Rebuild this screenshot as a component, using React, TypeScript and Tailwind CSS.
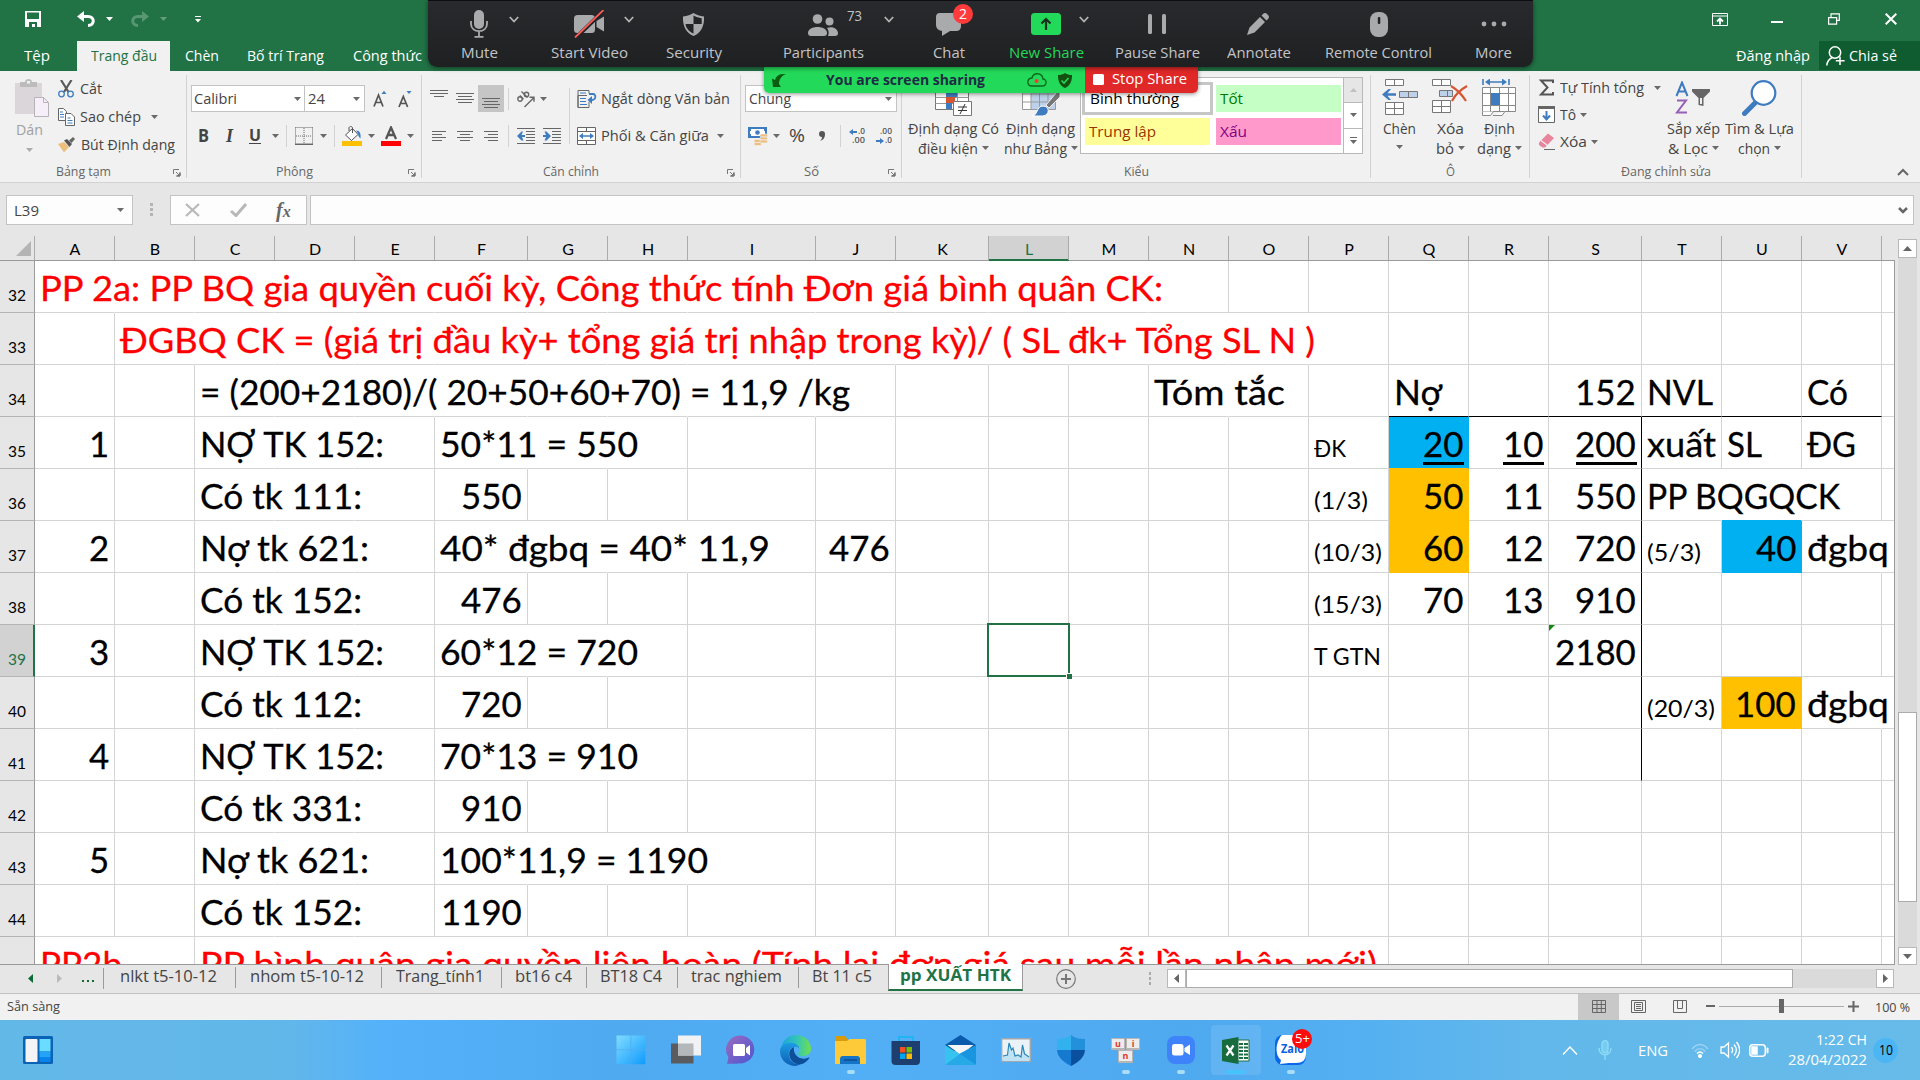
import React, { useLayoutEffect, useRef } from "react";

/* Text that is condensed or widened to take exactly `w` pixels. */
function T({ w, children, className = "", flat }: { w: number; children: React.ReactNode; className?: string; flat?: boolean }) {
  const inner = useRef<HTMLSpanElement>(null);
  useLayoutEffect(() => {
    const el = inner.current;
    if (!el) return;
    el.style.transform = "none";
    const natural = el.getBoundingClientRect().width;
    if (natural > 0) el.style.transform = `scaleX(${w / natural})`;
  }, [w, children]);
  return (
    <span className={"inline-block shrink-0 whitespace-pre text-left leading-none " + (flat ? "" : "-translate-y-px ") + className} style={{ width: w }}>
      <span ref={inner} className="inline-block origin-left">
        {children}
      </span>
    </span>
  );
}

function Caret({ className = "" }: { className?: string }) {
  return (
    <svg viewBox="0 0 7 4" className={"h-[4px] w-[7px] shrink-0 " + className}>
      <path d="M0 0h7L3.5 4z" fill="#6a6a6a" />
    </svg>
  );
}

function Sep({ className = "" }: { className?: string }) {
  return <div className={"w-px shrink-0 bg-[#d2d2d2] " + className} />;
}

function Launcher() {
  return (
    <svg viewBox="0 0 8 8" className="h-[8px] w-[8px]" fill="none" stroke="#777" strokeWidth="1">
      <path d="M.5 5V.5H6M3 3l3.5 3.5M7 3v4H3" />
      <path d="M7 4v3H4z" fill="#777" />
    </svg>
  );
}

function Group({ width, label, labelW, launcher, children }: { width: string; label: string; labelW: number; launcher?: boolean; children: React.ReactNode }) {
  return (
    <div className={"flex h-[111px] shrink-0 " + width}>
      <div className="flex min-w-0 flex-1 flex-col">
        <div className="flex h-[89px]">{children}</div>
        <div className={"relative flex h-[22px] items-center justify-center pt-[4px] text-[13.5px] text-[#666] " + (launcher ? "pr-[20px]" : "")}>
          <T w={labelW}>{label}</T>
          {launcher && (
            <div className="absolute right-[5px] top-[9px]">
              <Launcher />
            </div>
          )}
        </div>
      </div>
      <Sep className="mt-[4px] h-[103px]" />
    </div>
  );
}

function Big({ width, icon, a, aw, b, bw }: { width: string; icon: React.ReactNode; a: string; aw: number; b?: string; bw?: number }) {
  return (
    <div className={"flex shrink-0 flex-col items-center pt-[7px] " + width}>
      <div className="flex h-[40px] items-center">{icon}</div>
      <div className="flex h-[20px] items-center pt-[2px]">
        <T w={aw}>{a}</T>
      </div>
      <div className="flex h-[20px] items-center gap-[4px] pt-[3px]">
        {b && <T w={bw || 0}>{b}</T>}
        <Caret className={b ? "mb-[3px]" : "mb-[6px]"} />
      </div>
    </div>
  );
}

function Lines({ rows, className = "" }: { rows: [number, number, number][]; className?: string }) {
  return (
    <svg viewBox="0 0 18 18" className={"h-[18px] w-[18px] shrink-0 " + className} fill="#666">
      {rows.map(([x, y, w], i) => (
        <rect key={i} x={x} y={y} width={w} height="1" />
      ))}
    </svg>
  );
}

/* ---------- title bar and ribbon tabs ---------- */

function TitleBar() {
  return (
    <div className="flex h-[41px] items-center pb-[3px] text-white">
      <svg viewBox="0 0 16 16" className="ml-[25px] h-[16px] w-[16px]">
        <path fillRule="evenodd" fill="#fff" d="M0 0h16v16H0zM2 1.5V8h12V1.5zM4 16v-5h8v5h-2v-3H7v3z" />
        <path d="M4 11h8v4.5h-2V13H7v2.500H4z" fill="#217346" />
      </svg>
      <svg viewBox="0 0 18 16" className="ml-[36px] h-[16px] w-[18px]" fill="none" stroke="#fff" strokeWidth="3">
        <path d="M4 5.500h7c7 0 7 9 0 9" />
        <path d="M0 5.500L7 0v11z" fill="#fff" stroke="none" />
      </svg>
      <svg viewBox="0 0 7 4" className="ml-[11px] h-[4px] w-[7px]"><path d="M0 0h7L3.500 4z" fill="#fff" /></svg>
      <svg viewBox="0 0 18 16" className="ml-[18px] h-[16px] w-[18px] opacity-25" fill="none" stroke="#fff" strokeWidth="3">
        <path d="M14 5.500H7c-7 0-7 9 0 9" />
        <path d="M18 5.500L11 0v11z" fill="#fff" stroke="none" />
      </svg>
      <svg viewBox="0 0 7 4" className="ml-[11px] h-[4px] w-[7px] opacity-30"><path d="M0 0h7L3.500 4z" fill="#fff" /></svg>
      <svg viewBox="0 0 6 7" className="ml-[28px] h-[7px] w-[6px]"><path d="M0 0h6v1H0zM0 3h6L3 6.500z" fill="#fff" /></svg>
      <div className="flex-1" />
      <svg viewBox="0 0 16 13" className="h-[13px] w-[16px]" fill="none" stroke="#fff">
        <path d="M.5.500h15v12H.5zM.5 3h15" />
        <path d="M8 11.500V6M5 8.500l3-3 3 3" strokeWidth="1.800" />
      </svg>
      <div className="ml-[43px] mt-[6px] h-[2px] w-[12px] bg-white" />
      <svg viewBox="0 0 12 12" className="ml-[45px] h-[12px] w-[12px]" fill="none" stroke="#fff" strokeWidth="1.200">
        <path d="M.6 4.600h8v6.500h-8zM3 4.500V.8h8.300v6.500H9" />
      </svg>
      <svg viewBox="0 0 12 12" className="ml-[45px] mr-[23px] h-[12px] w-[12px]" stroke="#fff" strokeWidth="2">
        <path d="M.7.7l10.600 10.600M11.300.7L.7 11.300" />
      </svg>
    </div>
  );
}

function RibbonTabs() {
  return (
    <div className="flex h-[30px] items-center text-[15px] text-white">
      <T w={26} className="ml-[24px]">Tệp</T>
      <div className="ml-[27px] flex h-[30px] w-[93px] items-center justify-center bg-[#f1f1f1] text-[#217346]">
        <T w={66}>Trang đầu</T>
      </div>
      <T w={34} className="ml-[15px]">Chèn</T>
      <T w={77} className="ml-[28px]">Bố trí Trang</T>
      <T w={69} className="ml-[29px]">Công thức</T>
      <div className="flex-1" />
      <T w={74}>Đăng nhập</T>
      <div className="ml-[9px] flex h-[29px] w-[101px] items-center self-start bg-[#0e5c2f]">
        <svg viewBox="0 0 19 20" className="ml-[7px] h-[20px] w-[19px]" fill="none" stroke="#fff" strokeWidth="1.500">
          <circle cx="9" cy="6.500" r="5.700" />
          <path d="M.8 19.500c.3-4 2.500-6.500 5.500-8M14 10.500v8.500M9.800 14.700h8.800" />
        </svg>
        <T w={48} className="ml-[4px]" flat>Chia sẻ</T>
      </div>
    </div>
  );
}

/* ---------- ribbon groups ---------- */

function Clipboard() {
  return (
    <Group width="w-[187px]" label="Bảng tạm" labelW={55} launcher>
      <div className="flex w-[58px] flex-col pl-[15px] pt-[8px] text-[#a0a0a0]">
        <svg viewBox="0 0 34 38" className="h-[38px] w-[34px]">
          <path d="M0 4h27v31H0z" fill="#dad6da" />
          <path d="M5 3h5c0-4 7-4 7 0h5v5H5z" fill="#bcbcbc" />
          <rect x="12" y="2" width="3" height="2.500" fill="#f1f1f1" />
          <path d="M19.500 18.500h9l5 5v14h-14z" fill="#f6effa" stroke="#b7b2b7" />
          <path d="M28.500 18.500v5h5" fill="none" stroke="#b7b2b7" />
        </svg>
        <T w={27} className="ml-[1px] mt-[6px]">Dán</T>
        <Caret className="ml-[11px] mt-[10px] opacity-50" />
      </div>
      <div className="flex flex-col pt-[4px] text-[#444]">
        <div className="flex h-[28px] items-center">
          <svg viewBox="0 0 17 18" className="h-[18px] w-[17px]" fill="none">
            <path d="M3 0l7.500 12M13.500 0L6 12" stroke="#5a5a5a" strokeWidth="2.200" />
            <circle cx="3.500" cy="14" r="2.800" stroke="#3f7cbf" strokeWidth="1.300" />
            <circle cx="12.500" cy="14" r="2.800" stroke="#3f7cbf" strokeWidth="1.300" />
          </svg>
          <T w={22} className="ml-[5px]">Cắt</T>
        </div>
        <div className="flex h-[28px] items-center">
          <svg viewBox="0 0 17 18" className="h-[18px] w-[17px]" fill="#fff" stroke="#666">
            <path d="M.5.500h5l3 3v9h-8z" />
            <path d="M7.500 5.500h5.500l3.500 3.500v8.500h-9z" />
            <path d="M2 4h3M2 6.500h4M2 9h4M9.500 10h3M9.500 12.500h5M9.500 15h5" stroke="#3f7cbf" />
          </svg>
          <T w={61} className="ml-[5px]">Sao chép</T>
          <Caret className="ml-[10px]" />
        </div>
        <div className="flex h-[28px] items-center">
          <svg viewBox="0 0 17 16" className="h-[16px] w-[17px]">
            <path d="M0 7l6-2 5 5-5 5.500z" fill="#edbf7f" />
            <path d="M6 3.500l3-1.500 5 5-2.500 3z" fill="#555" />
            <path d="M11 3.500l4-3.500 2 2-3.500 4z" fill="#666" />
          </svg>
          <T w={94} className="ml-[6px]">Bút Định dạng</T>
        </div>
      </div>
    </Group>
  );
}

function FontGroup() {
  return (
    <Group width="w-[235px]" label="Phông" labelW={37} launcher>
      <div className="flex flex-col text-[#444]">
        <div className="mt-[14px] flex h-[27px] items-center">
          <div className="ml-[4px] flex h-[27px] w-[114px] items-center border border-[#c3c3c3] bg-white pl-[2px]">
            <T w={43} flat>Calibri</T>
            <Caret className="ml-auto mr-[3px]" />
          </div>
          <div className="-ml-px flex h-[27px] w-[61px] items-center border border-[#c3c3c3] bg-white pl-[3px]">
            <T w={17} flat>24</T>
            <Caret className="ml-auto mr-[4px]" />
          </div>
          <svg viewBox="0 0 16 18" className="ml-[8px] h-[18px] w-[16px]">
            <path d="M1 16.500L5.500 5 10 16.500M2.700 12.500h5.600" stroke="#555" strokeWidth="1.700" fill="none" />
            <path d="M8.500 4h5L11 .8z" fill="#3f7cbf" />
          </svg>
          <svg viewBox="0 0 16 18" className="ml-[9px] h-[18px] w-[16px]">
            <path d="M1 17L5.300 6.500 9.600 17M2.700 13.500h5.200" stroke="#555" strokeWidth="1.700" fill="none" />
            <path d="M8.500 1h5L11 4z" fill="#3f7cbf" />
          </svg>
        </div>
        <div className="mt-[8px] flex h-[32px] items-center">
          <T w={11} className="ml-[11px] text-[17px] font-bold">B</T>
          <span className="ml-[17px] w-[9px] font-['Liberation_Serif',serif] text-[18px] font-bold italic leading-none">I</span>
          <T w={12} className="ml-[14px] border-b-[1.5px] border-[#444] text-[16px] font-bold">U</T>
          <Caret className="ml-[11px]" />
          <Sep className="ml-[7px] h-[22px]" />
          <svg viewBox="0 0 18 18" className="ml-[8px] h-[18px] w-[18px]" fill="none" stroke="#666">
            <path d="M.5.500v17M.5.500h17M17.500.500v17M9 1v16M1 9h16" strokeDasharray="1 1" />
            <path d="M0 17.300h18" strokeWidth="1.500" />
          </svg>
          <Caret className="ml-[7px]" />
          <Sep className="ml-[7px] h-[22px]" />
          <svg viewBox="0 0 20 20" className="ml-[7px] h-[20px] w-[20px]">
            <rect y="15" width="20" height="5" fill="#ffc000" />
            <path d="M3.500 9l7-6.500 5.500 6-6.500 6z" fill="#fff" stroke="#555" />
            <path d="M7 5V2c0-2 3.500-2 3.500 0v5" fill="none" stroke="#555" />
            <path d="M14 4.500c4 0 5 3 4.500 8-1.500-1-2.300-3-2.500-5z" fill="#3f7cbf" />
          </svg>
          <Caret className="ml-[6px]" />
          <svg viewBox="0 0 20 20" className="ml-[6px] h-[20px] w-[20px]">
            <rect y="15" width="20" height="5" fill="#f00" />
            <path d="M5 13L10 1.500 15 13M6.500 9h7" stroke="#555" strokeWidth="2.300" fill="none" />
          </svg>
          <Caret className="ml-[6px]" />
        </div>
      </div>
    </Group>
  );
}

function Indent({ right }: { right?: boolean }) {
  return (
    <svg viewBox="0 0 18 18" className="h-[18px] w-[18px] shrink-0">
      <path d="M0 1.500h18M9 4.500h9M9 7.500h9M9 10.500h9M9 13.500h9M0 16.500h18" stroke="#666" />
      {right ? <path d="M0 8h3L1.500 4.500h2L8 9l-4.500 4.500h-2L3 10H0z" fill="#3f7cbf" /> : <path d="M8 8H4.500L6 4.500H4.500L0 9l4.500 4.500H6.500L5 10h3z" fill="#3f7cbf" />}
    </svg>
  );
}

function Alignment() {
  return (
    <Group width="w-[319px]" label="Căn chỉnh" labelW={56} launcher>
      <div className="flex w-[147px] flex-col">
        <div className="mt-[14px] flex h-[27px] items-center">
          <Lines className="ml-[8px]" rows={[[0, 0, 18], [4, 3, 10], [0, 3, 18], [4, 6, 10]]} />
          <Lines className="ml-[8px]" rows={[[0, 3, 18], [2, 6, 14], [0, 9, 18], [2, 12, 14]]} />
          <div className="ml-[4px] flex h-[27px] w-[26px] items-center justify-center bg-[#c5c5c5]">
            <Lines rows={[[0, 8, 18], [2, 11, 14], [0, 14, 18], [2, 17, 14]]} />
          </div>
          <Sep className="ml-[4px] h-[22px]" />
          <svg viewBox="0 0 18 18" className="ml-[8px] h-[18px] w-[18px]" fill="none" stroke="#666" strokeWidth="1.400">
            <circle cx="3" cy="9" r="2.200" />
            <path d="M2.800 5.500L6.500 9.300M4.500 1.500l6 6" />
            <circle cx="9.500" cy="4.500" r="2.200" />
            <path d="M7.500 17L17 7.500M12.500 7.300H17v4.500" />
          </svg>
          <Caret className="ml-[5px]" />
        </div>
        <div className="mt-[8px] flex h-[32px] items-center">
          <Lines className="ml-[8px]" rows={[[2, 4, 14], [2, 7, 10], [2, 10, 14], [2, 13, 10]]} />
          <Lines className="ml-[8px]" rows={[[1, 4, 16], [4, 7, 10], [1, 10, 16], [4, 13, 10]]} />
          <Lines className="ml-[8px]" rows={[[2, 4, 14], [6, 7, 10], [2, 10, 14], [6, 13, 10]]} />
          <Sep className="ml-[8px] h-[22px]" />
          <div className="ml-[8px] flex gap-[8px]">
            <Indent />
            <Indent right />
          </div>
        </div>
      </div>
      <Sep className="mt-[17px] h-[56px]" />
      <div className="ml-[7px] flex flex-col text-[#444]">
        <div className="mt-[14px] flex h-[27px] items-center">
          <svg viewBox="0 0 20 18" className="h-[18px] w-[20px]" fill="none">
            <path d="M12 17.500H1V.500h11v3M1 5.500h9M1 5.500v12M12 12v5.500" stroke="#666" />
            <path d="M3 3h6M3 8.500h6M3 11.500h6M3 14.500h7" stroke="#3f7cbf" />
            <path d="M12 4h4c3.500 0 3 6-1 6" stroke="#3f7cbf" strokeWidth="1.800" />
            <path d="M10.500 10l4.500-4v8z" fill="#3f7cbf" />
          </svg>
          <T w={129} className="ml-[4px]" flat>Ngắt dòng Văn bản</T>
        </div>
        <div className="mt-[8px] flex h-[32px] items-center">
          <svg viewBox="0 0 20 18" className="h-[18px] w-[20px]" fill="#fff" stroke="#666">
            <path d="M.5.500h18v17H.5zM.5 4.500h18M.5 13.500h18M9.500.500v4M9.500 13.500v4" />
            <path d="M3 9h13" stroke="#3f7cbf" strokeWidth="1.500" />
            <path d="M2 9l4-3v6zM17 9l-4-3v6z" fill="#3f7cbf" stroke="none" />
          </svg>
          <T w={108} className="ml-[4px]">Phối &amp; Căn giữa</T>
          <Caret className="ml-[8px]" />
        </div>
      </div>
    </Group>
  );
}

function Decimals({ left }: { left?: boolean }) {
  return (
    <div className="flex w-[16px] shrink-0 flex-col text-[9.5px] font-semibold leading-none text-[#555]">
      <div className="flex h-[9px] items-center justify-end">
        {left && <svg viewBox="0 0 8 6" className="mr-[1px] h-[6px] w-[8px]"><path d="M0 3l4-3v2h4v2H4v2z" fill="#3f7cbf" /></svg>}
        <T w={left ? 7 : 12}>{left ? ".0" : ".00"}</T>
      </div>
      <div className="flex h-[9px] items-center justify-end">
        {!left && <svg viewBox="0 0 8 6" className="mr-[1px] h-[6px] w-[8px]"><path d="M8 3L4 0v2H0v2h4v2z" fill="#3f7cbf" /></svg>}
        <T w={left ? 13 : 7}>{left ? ".00" : ".0"}</T>
      </div>
    </div>
  );
}

function NumberGroup() {
  return (
    <Group width="w-[161px]" label="Số" labelW={15} launcher>
      <div className="flex flex-col text-[#444]">
        <div className="ml-[4px] mt-[14px] flex h-[27px] w-[152px] items-center border border-[#c3c3c3] bg-white pl-[3px]">
          <T w={42} flat>Chung</T>
          <Caret className="ml-auto mr-[4px]" />
        </div>
        <div className="mt-[8px] flex h-[32px] items-center">
          <svg viewBox="0 0 20 20" className="ml-[7px] h-[20px] w-[20px]">
            <rect y="1" width="19" height="11" fill="#3f7cbf" />
            <path d="M3 3h13v2h1v3h-1v2H3V8H2V5h1z" fill="#fff" />
            <circle cx="9.500" cy="6.500" r="2.300" fill="#3f7cbf" />
            <g fill="#edbf7f" stroke="#f1f1f1" strokeWidth=".7">
              <rect x="12" y="8" width="7.500" height="3" rx="1.400" /><rect x="12" y="11" width="7.500" height="3" rx="1.400" />
              <rect x="6" y="13.500" width="7.500" height="3" rx="1.400" /><rect x="6" y="16.500" width="7.500" height="3" rx="1.400" /><rect x="12" y="14" width="7.500" height="3" rx="1.400" />
            </g>
          </svg>
          <Caret className="ml-[5px]" />
          <T w={16} className="ml-[9px] text-[18px]">%</T>
          <svg viewBox="0 0 7 10" className="ml-[14px] h-[10px] w-[7px]"><path d="M0 3a3 3 0 0 1 6 0c0 4-2 6-5 7 1.500-1.500 2-2.500 2-4A3 3 0 0 1 0 3z" fill="#555" /></svg>
          <Sep className="ml-[14px] h-[22px]" />
          <div className="ml-[8px] flex gap-[11px]">
            <Decimals left />
            <Decimals />
          </div>
        </div>
      </div>
    </Group>
  );
}

function Swatch({ bg, color, w, children }: { bg: string; color: string; w: number; children: string }) {
  return (
    <div className={"flex h-[27px] w-[125px] items-center pl-[4px] " + bg + " " + color}>
      <T w={w} flat>{children}</T>
    </div>
  );
}

function Styles() {
  return (
    <Group width="w-[469px]" label="Kiểu" labelW={25}>
      <Big
        width="w-[99px] ml-[2px] text-[#444]"
        a="Định dạng Có" aw={91} b="điều kiện" bw={60}
        icon={
          <svg viewBox="0 0 38 38" className="h-[38px] w-[38px]" stroke="#777">
            <path d="M.5.500h33v30H.5z" fill="#fff" />
            <path d="M.5 6.500h33M.5 12.500h33M.5 18.500h33M.5 24.500h33M11.500.500v30M22.500.500v30" stroke="#999" />
            <path d="M11 13h11v5H11zM11 24h6v6h-6z" fill="#3f7cbf" stroke="none" />
            <path d="M11 18h9v6h-9z" fill="#d65532" stroke="none" />
            <path d="M18.500 22.500h18v14h-18z" fill="#fff" />
            <path d="M23 28h9M23 31.500h9M30 25l-5 10" stroke="#333" />
          </svg>
        }
      />
      <Big
        width="w-[75px] text-[#444]"
        a="Định dạng" aw={69} b="như Bảng" bw={63}
        icon={
          <svg viewBox="0 0 38 38" className="h-[38px] w-[38px]" stroke="#999">
            <path d="M.5.500h33v30H.5z" fill="#fff" />
            <path d="M9 7h24v23H9z" fill="#bdd2ea" stroke="none" />
            <path d="M.5 7h33M.5 15h33M.5 23h33M9 .5v30M17.500.500v30M26 .5v30" />
            <path d="M24 26L35 13h3v5L27 29z" fill="#777" stroke="#f1f1f1" />
            <path d="M10 37c6 0 4-10 11-10s7 9 0 10z" fill="#3f7cbf" stroke="#fff" />
          </svg>
        }
      />
      <div className="ml-[2px] mt-[6px] flex h-[77px] w-[283px] border border-[#b9b9b9] bg-white text-[15px]">
        <div className="flex w-[262px] flex-col gap-[3px] pl-[1px] pt-[4px]">
          <div className="flex gap-[3px]">
            <div className="flex h-[33px] w-[131px] items-center border-[3px] border-[#c6c6c6] pl-[5px] text-black">
              <T w={89} flat>Bình thường</T>
            </div>
            <div className="pt-[3px]"><Swatch bg="bg-[#c6ffc6]" color="text-[#007a00]" w={23}>Tốt</Swatch></div>
          </div>
          <div className="flex gap-[6px] pl-[3px]">
            <Swatch bg="bg-[#ffff99]" color="text-[#993300]" w={67}>Trung lập</Swatch>
            <Swatch bg="bg-[#ff99cc]" color="text-[#800080]" w={27}>Xấu</Swatch>
          </div>
        </div>
        <div className="flex flex-1 flex-col border-l border-[#b9b9b9]">
          <div className="flex flex-1 items-center justify-center bg-[#e6e6e6]"><Caret className="rotate-180 opacity-30" /></div>
          <div className="flex flex-1 items-center justify-center border-y border-[#b9b9b9]"><Caret /></div>
          <div className="flex flex-1 flex-col items-center justify-center gap-[2px]"><div className="h-px w-[7px] bg-[#6a6a6a]" /><Caret /></div>
        </div>
      </div>
    </Group>
  );
}

function Cells() {
  return (
    <Group width="w-[159px]" label="Ô" labelW={9}>
      <Big
        width="w-[47px] ml-[5px] text-[#444]" a="Chèn" aw={33}
        icon={
          <svg viewBox="0 0 36 38" className="h-[38px] w-[36px]" fill="#fff" stroke="#777">
            <path d="M3.500.500h18v6h-18zM12.500.500v6M3.500 23.500h18v12h-18zM12.500 23.500v12M3.500 29.500h18" />
            <path d="M17.500 12.500h18v6h-18zM26.500 12.500v6" fill="#bdd2ea" />
            <path d="M0 15.500L6.500 10H9l-3.500 4.200H14v2.600H5.500L9 21H6.500z" fill="#3f7cbf" stroke="none" />
          </svg>
        }
      />
      <Big
        width="w-[50px] ml-[2px] text-[#444]" a="Xóa" aw={27} b="bỏ" bw={18}
        icon={
          <svg viewBox="0 0 36 38" className="h-[38px] w-[36px]" fill="#fff" stroke="#777">
            <path d="M.5.500h18v6h-18zM9.500.500v6M.5 21.500h18v12h-18zM9.500 21.500v12M.5 27.500h18" />
            <path d="M7.500 11.500h13v6h-13zM15.500 11.500v6" fill="#bdd2ea" />
            <path d="M19 7c5 3 10 7 15 15M35 7c-7 4-12 9-15 15" stroke="#d65532" strokeWidth="2.200" fill="none" />
          </svg>
        }
      />
      <Big
        width="w-[49px] text-[#444]" a="Định" aw={31} b="dạng" bw={34}
        icon={
          <svg viewBox="0 0 35 38" className="h-[38px] w-[35px]" fill="#fff" stroke="#888">
            <path d="M.5 8.500h33v24H.5z" />
            <path d="M.5 14.500h33M.5 26.500h33M8.500 8.500v24M17.500 8.500v24M26.500 8.500v24M.5 32.500v4h8l3-4M11 36.500h9l3-4" />
            <path d="M9 14h9v12H9z" fill="#3f7cbf" stroke="none" />
            <path d="M1 0v6M27 0v6M5 3h18" stroke="#3f7cbf" strokeWidth="1.600" />
            <path d="M3 3l5-3.500v7zM25 3l-5-3.500v7z" fill="#3f7cbf" stroke="none" />
          </svg>
        }
      />
    </Group>
  );
}

function Editing() {
  return (
    <Group width="w-[272px]" label="Đang chỉnh sửa" labelW={90}>
      <div className="ml-[8px] flex w-[126px] flex-col pt-[3px] text-[#444]">
        <div className="flex h-[27px] items-center">
          <svg viewBox="0 0 17 17" className="h-[17px] w-[17px]" fill="none" stroke="#555" strokeWidth="2"><path d="M15 4V1.500H3L9.500 8.500 3 15.500h12V13" /></svg>
          <T w={84} className="ml-[5px]" flat>Tự Tính tổng</T>
          <Caret className="ml-[10px]" />
        </div>
        <div className="flex h-[27px] items-center">
          <svg viewBox="0 0 17 17" className="h-[17px] w-[17px]" fill="#fff" stroke="#666"><path d="M.5.500h16v16H.5z" /><path d="M0 1.500h17" strokeWidth="3" /><path d="M8.500 5v8M5 9.500l3.500 4 3.500-4" stroke="#3f7cbf" strokeWidth="2" fill="none" /></svg>
          <T w={16} className="ml-[5px]" flat>Tô</T>
          <Caret className="ml-[4px]" />
        </div>
        <div className="flex h-[27px] items-center">
          <svg viewBox="0 0 17 17" className="h-[17px] w-[17px]"><path d="M1 9.500L10 .5l6 4.500-9 9.500H4.500L1 12z" fill="#e8849b" /><path d="M3 7.500l6.500 5" stroke="#f1f1f1" strokeWidth="1.200" /><path d="M6 16.500h11" stroke="#666" /></svg>
          <T w={27} className="ml-[5px]" flat>Xóa</T>
          <Caret className="ml-[4px]" />
        </div>
      </div>
      <Big
        width="w-[58px] text-[#444]" a="Sắp xếp" aw={53} b="& Lọc" bw={40}
        icon={
          <svg viewBox="0 0 36 34" className="h-[34px] w-[36px]" fill="none">
            <path d="M1.500 15L7 1.500 12.500 15M3.500 10.500h7" stroke="#3f7cbf" strokeWidth="2" />
            <path d="M2 19.500h9L2 31.500h10" stroke="#9560b5" strokeWidth="2" />
            <path d="M17 8h18v2.500L28.500 17v8l-5-1v-7L17 10.500z" fill="#666" />
            <path d="M25 17h2v6h-2z" fill="#f1f1f1" />
          </svg>
        }
      />
      <Big
        width="w-[72px] ml-[1px] text-[#444]" a="Tìm & Lựa" aw={69} b="chọn" bw={32}
        icon={
          <svg viewBox="0 0 35 36" className="h-[36px] w-[35px]" fill="none" stroke="#3f7cbf">
            <path d="M13 23L2.500 33.500" strokeWidth="5" strokeLinecap="round" />
            <circle cx="21.500" cy="13" r="11.800" strokeWidth="2.200" fill="#fff" />
          </svg>
        }
      />
    </Group>
  );
}

function Ribbon() {
  return (
    <div className="flex h-[112px] border-b border-[#d2d2d2] bg-[#f1f1f1] text-[15px]">
      <Clipboard />
      <FontGroup />
      <Alignment />
      <NumberGroup />
      <Styles />
      <Cells />
      <Editing />
      <div className="flex flex-1 items-end justify-end pb-[6px] pr-[11px]">
        <svg viewBox="0 0 12 8" className="h-[8px] w-[12px]" fill="none" stroke="#666" strokeWidth="2"><path d="M1 7l5-5 5 5" /></svg>
      </div>
    </div>
  );
}

function FormulaBar() {
  return (
    <div className="flex h-[53px] items-start pt-[12px] text-[15px] text-[#444]">
      <div className="ml-[6px] flex h-[30px] w-[127px] items-center border border-[#c3c3c3] bg-[#fdfdfd] pl-[7px]">
        <T w={25} flat>L39</T>
        <Caret className="ml-auto mr-[8px]" />
      </div>
      <div className="ml-[17px] mt-[8px] flex flex-col gap-[2px]">
        <div className="h-[3px] w-[3px] bg-[#b4b4b4]" /><div className="h-[3px] w-[3px] bg-[#b4b4b4]" /><div className="h-[3px] w-[3px] bg-[#b4b4b4]" />
      </div>
      <div className="ml-[17px] flex h-[30px] w-[137px] items-center border border-[#c3c3c3] bg-[#fdfdfd]">
        <svg viewBox="0 0 15 14" className="ml-[14px] h-[14px] w-[15px]" stroke="#b8b8b8" strokeWidth="2.200"><path d="M1 1l13 12M14 1L1 13" /></svg>
        <svg viewBox="0 0 17 14" className="ml-[30px] h-[14px] w-[17px]" stroke="#b8b8b8" strokeWidth="3" fill="none"><path d="M1 8l5 4.500L16 1" /></svg>
        <span className="ml-[29px] w-[18px] whitespace-nowrap font-['Liberation_Serif',serif] text-[20px] font-bold italic leading-none text-[#666]">f<span className="text-[16px]">x</span></span>
      </div>
      <div className="ml-[3px] flex h-[30px] w-[1604px] items-center justify-end border border-[#c3c3c3] bg-[#fdfdfd] pr-[5px]">
        <svg viewBox="0 0 10 7" className="h-[7px] w-[10px]" fill="none" stroke="#666" strokeWidth="2.500"><path d="M1 1l4 4 4-4" /></svg>
      </div>
    </div>
  );
}

/* ---------- sheet ---------- */

type Cell = { t?: string; w?: number; r?: boolean; s?: boolean; u?: boolean; red?: boolean; bg?: string };
type Row = { n: number; cells: Record<string, Cell>; open?: string };

const COLS = "ABCDEFGHIJKLMNOPQRSTUV".split("");
const colWidth = (c: string) => (c === "I" ? "w-[128px]" : "FKS".includes(c) ? "w-[93px]" : "w-[80px]");
const num = (t: string): Cell => ({ t, w: t.length * 20.2, r: true });
const sm = (t: string, w: number): Cell => ({ t, w, s: true });
const BLUE = "bg-[#00b0f0]";
const AMBER = "bg-[#ffc000]";

/* `open` lists the columns whose right grid line is covered by running text. */
const ROWS: Row[] = [
  { n: 32, open: "ABCDEFGHIJKLM", cells: { A: { t: "PP 2a: PP BQ gia quyền cuối kỳ, Công thức tính Đơn giá bình quân CK:", w: 1123, red: true } } },
  { n: 33, open: "BCDEFGHIJKLMNO", cells: { B: { t: "ĐGBQ CK = (giá trị đầu kỳ+ tổng giá trị nhập trong kỳ)/ ( SL đk+ Tổng SL N )", w: 1195, red: true } } },
  { n: 34, open: "CDEFGHIN", cells: { C: { t: "= (200+2180)/( 20+50+60+70) = 11,9 /kg", w: 650 }, N: { t: "Tóm tắc", w: 131 }, Q: { t: "Nợ", w: 48 }, S: num("152"), T: { t: "NVL", w: 66 }, V: { t: "Có", w: 41 } } },
  { n: 35, open: "CDFG", cells: { A: num("1"), C: { t: "NỢ TK 152:", w: 184 }, F: { t: "50*11 = 550", w: 198 }, P: sm("ĐK", 32), Q: { ...num("20"), u: true, bg: BLUE + " border-r-[#00b0f0] border-b-[#ffc000]" }, R: { ...num("10"), u: true }, S: { ...num("200"), u: true }, T: { t: "xuất", w: 69 }, U: { t: "SL", w: 35 }, V: { t: "ĐG", w: 49 } } },
  { n: 36, open: "CDTU", cells: { C: { t: "Có tk 111:", w: 162 }, F: num("550"), P: sm("(1/3)", 54), Q: { ...num("50"), bg: AMBER + " border-[#ffc000]" }, R: num("11"), S: num("550"), T: { t: "PP BQGQCK", w: 193 }, U: { bg: "border-b-[#00b0f0]" } } },
  { n: 37, open: "CDFGHV", cells: { A: num("2"), C: { t: "Nợ tk 621:", w: 169 }, F: { t: "40* đgbq = 40* 11,9", w: 330 }, J: num("476"), P: sm("(10/3)", 68), Q: { ...num("60"), bg: AMBER + " border-[#ffc000]" }, R: num("12"), S: num("720"), T: sm("(5/3)", 54), U: { ...num("40"), bg: BLUE + " border-[#00b0f0]" }, V: { t: "đgbq", w: 82 } } },
  { n: 38, open: "CD", cells: { C: { t: "Có tk 152:", w: 162 }, F: num("476"), P: sm("(15/3)", 68), Q: num("70"), R: num("13"), S: num("910") } },
  { n: 39, open: "CDFG", cells: { A: num("3"), C: { t: "NỢ TK 152:", w: 184 }, F: { t: "60*12 = 720", w: 198 }, P: sm("T GTN", 67), S: num("2180") } },
  { n: 40, open: "CDV", cells: { C: { t: "Có tk 112:", w: 162 }, F: num("720"), T: sm("(20/3)", 68), U: { ...num("100"), bg: AMBER + " border-[#ffc000]" }, V: { t: "đgbq", w: 82 } } },
  { n: 41, open: "CDFG", cells: { A: num("4"), C: { t: "NỢ TK 152:", w: 184 }, F: { t: "70*13 = 910", w: 198 } } },
  { n: 42, open: "CD", cells: { C: { t: "Có tk 331:", w: 162 }, F: num("910") } },
  { n: 43, open: "CDFGH", cells: { A: num("5"), C: { t: "Nợ tk 621:", w: 169 }, F: { t: "100*11,9 = 1190", w: 268 } } },
  { n: 44, open: "CD", cells: { C: { t: "Có tk 152:", w: 162 }, F: num("1190") } },
  { n: 45, open: "ACDEFGHIJKLMNO", cells: { A: { t: "PP2b", w: 82, red: true }, C: { t: "PP bình quân gia quyền liên hoàn (Tính lại đơn giá sau mỗi lần nhập mới)", w: 1177, red: true } } },
];

function borderFor(row: Row, c: string) {
  const right = c === "S" && row.n >= 35 && row.n <= 41 ? "border-r-black" : (row.open || "").includes(c) ? "border-r-transparent" : "border-r-[#d4d4d4]";
  const bottom = row.n === 34 && "QRSTUV".includes(c) ? "border-b-black" : "border-b-[#d4d4d4]";
  return right + " " + bottom;
}

function SheetCell({ row, c }: { row: Row; c: string }) {
  const cell = row.cells[c];
  const own = cell?.bg || "";
  const full = own.includes(" border-[");
  const half = own.startsWith("border-b");
  const border = full || own.includes("border-r-") ? "" : half ? "border-r-transparent" : borderFor(row, c);
  return (
    <div className={`relative h-[52px] shrink-0 whitespace-nowrap border-b border-r pl-[5px] pr-[5px] text-[35px] leading-[53px] ${colWidth(c)} ${border} ${own} ${cell?.r ? "text-right" : ""} ${cell?.red ? "text-[#ff0000]" : "text-black"}`}>
      {cell?.t && (
        <T flat w={cell.w || 0} className={cell.s ? "text-[24px]" : cell.red ? "[-webkit-text-stroke:0.3px_#ff0000]" : "[-webkit-text-stroke:0.3px_#000000]"}>
          {cell.t}
        </T>
      )}
      {cell?.u && <div className={"absolute right-[4px] top-[45px] h-[3px] bg-black " + (cell.t!.length === 3 ? "w-[61px]" : "w-[41px]")} />}
      {row.n === 39 && c === "L" && (
        <div className="absolute -left-[2px] -top-[2px] z-10 h-[54px] w-[83px] border-2 border-[#217346]">
          <div className="absolute -bottom-[4px] -right-[4px] h-[6px] w-[6px] border-l border-t border-white bg-[#217346]" />
        </div>
      )}
      {row.n === 39 && c === "S" && <div className="absolute left-0 top-0 h-0 w-0 border-r-[6px] border-t-[6px] border-r-transparent border-t-[#128a12]" />}
    </div>
  );
}

function Sheet() {
  return (
    <div className="flex h-[729px]">
      <div className="flex w-[1895px] shrink-0 flex-col overflow-hidden font-['Lato','Noto_Sans',sans-serif]">
        <div className="flex h-[25px] border-b border-[#9b9b9b]">
          <div className="flex h-[24px] w-[35px] shrink-0 justify-end border-r border-[#ababab] pr-[3px] pt-[5px]">
            <svg viewBox="0 0 15 15" className="h-[15px] w-[15px]"><path d="M15 0v15H0z" fill="#b4b4b4" /></svg>
          </div>
          {COLS.map((c) => (
            <div key={c} className={`h-[24px] shrink-0 border-r border-[#ababab] pl-[1px] text-center text-[16px] leading-[25px] ${colWidth(c)} ${c === "L" ? "bg-[#d2d2d2] text-[#217346] shadow-[inset_0_-1px_0_#217346,0_1px_0_#217346]" : "text-black"}`}>
              {c}
            </div>
          ))}
        </div>
        <div className="h-[703px] overflow-hidden border-r border-[#9b9b9b] bg-white">
          {ROWS.map((row) => (
            <div key={row.n} className="flex h-[52px] w-[1894px]">
              <div className={`h-[52px] w-[35px] shrink-0 border-b border-r border-b-[#b4b4b4] text-center text-[35px] leading-[53px] ${row.n === 39 ? "border-r-2 border-r-[#217346] bg-[#d2d2d2] text-[#217346]" : "border-r-[#9b9b9b] bg-[#e6e6e6] text-black"}`}>
                {row.n < 45 && <T flat w={18} className="text-[16px]">{String(row.n)}</T>}
              </div>
              {COLS.map((c) => (
                <SheetCell key={c} row={row} c={c} />
              ))}
              <div className="h-[52px] w-[13px] shrink-0 border-b border-[#d4d4d4]" />
            </div>
          ))}
        </div>
        <div className="h-px bg-[#9b9b9b]" />
      </div>
      <div className="ml-[3px] mt-[3px] flex h-[726px] w-[19px] flex-col bg-[#dadada]">
        <div className="flex h-[19px] items-center justify-center border border-[#b9b9b9] bg-white">
          <svg viewBox="0 0 9 5" className="h-[5px] w-[9px]"><path d="M0 5h9L4.500 0z" fill="#666" /></svg>
        </div>
        <div className="mt-[454px] h-[190px] border border-[#ababab] bg-white" />
        <div className="mt-auto flex h-[18px] items-center justify-center border border-[#b9b9b9] bg-white">
          <svg viewBox="0 0 9 5" className="h-[5px] w-[9px]"><path d="M0 0h9L4.500 5z" fill="#666" /></svg>
        </div>
      </div>
    </div>
  );
}

function SheetTab({ w, gap, end, children }: { w: number; gap: string; end: string; children: string }) {
  return (
    <>
      <T w={w} className={gap}>{children}</T>
      <div className={"h-[21px] w-px shrink-0 bg-[#9b9b9b] " + end} />
    </>
  );
}

function SheetTabs() {
  return (
    <div className="flex h-[29px] items-start border-b border-[#c0c0c0] text-[16px] text-[#444]">
      <div className="flex h-[24px] items-center">
        <svg viewBox="0 0 5 9" className="ml-[28px] mt-[3px] h-[9px] w-[5px]"><path d="M5 0v9L0 4.500z" fill="#0e6b38" /></svg>
        <svg viewBox="0 0 5 9" className="ml-[24px] mt-[3px] h-[9px] w-[5px]"><path d="M0 0v9l5-4.500z" fill="#bbb" /></svg>
        <div className="ml-[20px] mt-[7px] flex gap-[3px]">
          <div className="h-[2px] w-[2px] bg-[#0e6b38]" /><div className="h-[2px] w-[2px] bg-[#0e6b38]" /><div className="h-[2px] w-[2px] bg-[#0e6b38]" />
        </div>
        <div className="ml-[9px] mt-[2px] h-[21px] w-px bg-[#9b9b9b]" />
        <SheetTab w={97} gap="ml-[16px]" end="ml-[18px]">nlkt t5-10-12</SheetTab>
        <SheetTab w={114} gap="ml-[14px]" end="ml-[17px]">nhom t5-10-12</SheetTab>
        <SheetTab w={88} gap="ml-[14px]" end="ml-[17px]">Trang_tính1</SheetTab>
        <SheetTab w={57} gap="ml-[13px]" end="ml-[14px]">bt16 c4</SheetTab>
        <SheetTab w={62} gap="ml-[13px]" end="ml-[15px]">BT18 C4</SheetTab>
        <SheetTab w={91} gap="ml-[13px]" end="ml-[16px]">trac nghiem</SheetTab>
        <T w={60} className="ml-[13px]">Bt 11 c5</T>
      </div>
      <div className="ml-[16px] -mt-px flex h-[27px] w-[135px] shrink-0 items-center justify-center border-x border-b-2 border-x-[#9b9b9b] border-b-[#217346] bg-white pb-[1px] font-bold text-[#217346]">
        <T w={111}>pp XUẤT HTK</T>
      </div>
      <svg viewBox="0 0 20 20" className="ml-[33px] mt-[4px] h-[20px] w-[20px] shrink-0" fill="none" stroke="#777"><circle cx="10" cy="10" r="9.300" strokeWidth="1.200" /><path d="M10 5v10M5 10h10" strokeWidth="2" /></svg>
      <div className="ml-[73px] mt-[7px] flex flex-col gap-[2px]">
        <div className="h-[3px] w-[2px] bg-[#aaa]" /><div className="h-[3px] w-[2px] bg-[#aaa]" /><div className="h-[3px] w-[2px] bg-[#aaa]" />
      </div>
      <div className="ml-[16px] mt-[4px] flex h-[19px] w-[727px] bg-[#dadada]">
        <div className="flex w-[19px] items-center justify-center border border-[#b9b9b9] bg-white"><svg viewBox="0 0 5 9" className="h-[9px] w-[5px]"><path d="M5 0v9L0 4.500z" fill="#666" /></svg></div>
        <div className="w-[607px] border border-[#ababab] bg-white" />
        <div className="ml-auto flex w-[18px] items-center justify-center border border-[#b9b9b9] bg-white"><svg viewBox="0 0 5 9" className="h-[9px] w-[5px]"><path d="M0 0v9l5-4.500z" fill="#666" /></svg></div>
      </div>
    </div>
  );
}

function StatusBar() {
  return (
    <div className="flex h-[26px] items-center bg-[#f1f1f1] text-[13px] text-[#444]">
      <T w={53} className="ml-[7px]">Sẵn sàng</T>
      <div className="flex-1" />
      <div className="flex h-[26px] w-[41px] items-center justify-center bg-[#c8c8c8]">
        <svg viewBox="0 0 14 13" className="-mt-[2px] h-[13px] w-[14px]" fill="none" stroke="#666"><path d="M.5.500h13v12H.5zM5 .5v12M9.300.500v12M.5 4.500h13M.5 8.500h13" /></svg>
      </div>
      <svg viewBox="0 0 15 13" className="-mt-[2px] ml-[12px] h-[13px] w-[15px]" fill="none" stroke="#666"><path d="M.5.500h14v12H.5zM3.500 2.500h8v8h-8zM5 4.500h5M5 6.500h5M5 8.500h5" /></svg>
      <svg viewBox="0 0 14 13" className="-mt-[2px] ml-[27px] h-[13px] w-[14px]" fill="none" stroke="#666"><path d="M.5.500h13v12H.5zM4.500.500v8M9.500.500v8M4.500 8.500h5" /></svg>
      <div className="-mt-[2px] ml-[19px] h-[2px] w-[9px] bg-[#666]" />
      <div className="-mt-[2px] ml-[4px] flex h-[14px] w-[125px] items-center justify-center">
        <div className="h-px w-[60px] bg-[#aaa]" /><div className="h-[14px] w-[5px] bg-[#666]" /><div className="h-px w-[60px] bg-[#aaa]" />
      </div>
      <svg viewBox="0 0 11 11" className="-mt-[2px] ml-[4px] h-[11px] w-[11px]" stroke="#666" strokeWidth="2"><path d="M5.500 0v11M0 5.500h11" /></svg>
      <T w={35} className="ml-[16px] mr-[10px]" flat>100 %</T>
    </div>
  );
}

/* ---------- taskbar ---------- */

function Slot({ dot, active, children }: { dot?: boolean; active?: boolean; children: React.ReactNode }) {
  return (
    <div className="relative flex h-[60px] w-[55px] shrink-0 items-center justify-center">
      <div className={"flex h-[50px] w-[50px] items-center justify-center rounded-[4px] " + (active ? "bg-white/10" : "")}>{children}</div>
      {dot && <div className="absolute bottom-[6px] left-[24px] h-[4px] w-[8px] rounded-full bg-[#a9dcf8]" />}
      {active && <div className="absolute bottom-[6px] left-[18px] h-[4px] w-[19px] rounded-full bg-[#45c3fd]" />}
    </div>
  );
}

function Taskbar() {
  return (
    <div className="flex h-[60px] items-center bg-[linear-gradient(90deg,#62b8e7_0%,#62b7ea_15%,#54b1fa_20%,#4faaf0_32%,#52aff6_45%,#4fa9ef_62%,#53aff2_70%,#62b8ea_80%,#66bbe9_100%)] text-[15px] text-white">
      <svg viewBox="0 0 30 28" className="ml-[23px] h-[28px] w-[30px] shrink-0">
        <rect width="30" height="28" rx="1.500" fill="#0b63b6" /><rect x="2.500" y="3" width="12" height="23" rx="1" fill="#f4f4f6" />
        <path d="M16.500 3h11v12.500h-11z" fill="#6adcff" /><path d="M16.500 15.500h11V21h-11z" fill="#22a5f7" /><path d="M16.500 21h11v5h-11z" fill="#0a84ea" />
      </svg>
      <div className="ml-[550px] flex">
        <Slot>
          <svg viewBox="0 0 30 30" className="h-[30px] w-[30px]">
            <defs><linearGradient id="win" x1="0" y1="0" x2="1" y2="1"><stop offset="0" stopColor="#82dcff" /><stop offset="1" stopColor="#0f9bfd" /></linearGradient></defs>
            <path d="M.5.500h14v14H.5zM15.300.500h14v14h-14zM.5 15.300h14v14H.5zM15.300 15.300h14v14h-14z" fill="url(#win)" />
          </svg>
        </Slot>
        <Slot>
          <svg viewBox="0 0 30 30" className="h-[30px] w-[30px]"><path d="M0 8.500h22.500v20H0z" fill="#5a5c5f" /><path d="M7 0.500h23v20H7z" fill="#f0f2f4" /><path d="M7 8.500h15.500v12H7z" fill="#b5b8bb" /></svg>
        </Slot>
        <Slot>
          <svg viewBox="0 0 30 30" className="h-[30px] w-[30px]">
            <defs><linearGradient id="chat" x1="0" y1="0" x2="1" y2="1"><stop offset="0" stopColor="#9b6cc0" /><stop offset="1" stopColor="#4c55cf" /></linearGradient></defs>
            <path d="M15 .5a14 14 0 1 1-3 27.800q-1 .5-2.500.5H1l1.500-6.500A14 14 0 0 1 15 .5z" fill="url(#chat)" />
            <rect x="7" y="9" width="12" height="12" rx="1.500" fill="#fff" /><path d="M20 13l4-3v10.500l-4-3z" fill="#fff" />
          </svg>
        </Slot>
        <Slot>
          <svg viewBox="0 0 32 32" className="h-[31px] w-[31px]">
            <defs>
              <linearGradient id="e1" x1="0" y1="0.300" x2="1" y2="0.300"><stop offset="0" stopColor="#1aa3df" /><stop offset=".55" stopColor="#35c6b4" /><stop offset="1" stopColor="#6fe04a" /></linearGradient>
              <linearGradient id="e2" x1="0" y1="0" x2="0" y2="1"><stop offset="0" stopColor="#1b9de2" /><stop offset="1" stopColor="#0f5fb4" /></linearGradient>
            </defs>
            <path d="M1 15C2 5 9 0 16.500 0 26 0 32 7 32 14c0 5-4 8-8.500 8-3.500 0-5-1.500-5-2.500s1.500-1.500 1.500-4.500c0-4-4-7-9-7-5 0-9 3-10 7z" fill="url(#e1)" />
            <path d="M0 17C0 11 5 8 11 8c5 0 9 3 9 7 0-2-2-3-4-3-4 0-7 3-7 7 0 7 6 13 13 10.500C19.500 31.300 18 32 16 32 7 32 0 25 0 17z" fill="url(#e2)" />
            <path d="M9.500 19c0-3 2-5.500 5-6.500-1.500 6 3.500 12 9.500 12 2.500 0 4-.7 5.500-1.300.6-.2 1 .3.700.8-2 3-5 5.500-8.500 6.300C14.500 31 9.500 25.500 9.500 19z" fill="#0d4f98" />
          </svg>
        </Slot>
        <Slot dot>
          <svg viewBox="0 0 31 28" className="h-[28px] w-[31px]">
            <path d="M0 1.500Q0 0 1.500 0H10l3 3.500V9H0z" fill="#d99b0b" /><path d="M0 5h12l2.500-2H29.500Q31 3 31 4.500V27q0 1-1 1H1q-1 0-1-1z" fill="#fdcb3a" />
            <path d="M5 28v-5q0-3 3-3h14q3 0 3 3v5z" fill="#1474c6" /><path d="M9 24h13" stroke="#0c4b91" strokeWidth="1.500" />
          </svg>
        </Slot>
        <Slot>
          <svg viewBox="0 0 30 31" className="h-[31px] w-[30px]">
            <path d="M8 7V2h14v5" fill="none" stroke="#1fb5f2" strokeWidth="2" /><path d="M.5 6h28.500v20q0 4-4 4H4.500q-4 0-4-4z" fill="#1c3f70" />
            <path d="M9 12h5.500v5.500H9z" fill="#f25022" /><path d="M15.500 12H21v5.500h-5.500z" fill="#7fba00" /><path d="M9 18.500h5.500V24H9z" fill="#00a4ef" /><path d="M15.500 18.500H21V24h-5.500z" fill="#ffb900" />
          </svg>
        </Slot>
        <Slot>
          <svg viewBox="0 0 31 30" className="h-[30px] w-[31px]"><path d="M0 10L15.500 0 31 10v6H0z" fill="#0a5bab" /><path d="M2.500 10h26L16 20z" fill="#f3f5f7" /><path d="M0 10l31 20H0z" fill="#36c3f0" /><path d="M31 10v20L14 19z" fill="#1995df" /><path d="M0 30l15-11 16 11z" fill="#27a9e8" /></svg>
        </Slot>
        <Slot>
          <svg viewBox="0 0 30 24" className="h-[24px] w-[30px]"><path d="M.7.700h28.600v22.600H.7z" fill="#eaf3f8" stroke="#a3a8ac" strokeWidth="1.400" /><path d="M2 18l5-1 1.500-12L12 14l2 4 3-1 3 2 2-12 2 8 4 3v5H2z" fill="#bfe3f5" /><path d="M2 18l4.500-1L8 5l2.500 7L12 10l2 8 3-1 3 2 1.500-12 2 9L28 19" fill="none" stroke="#2d86b6" strokeWidth="1.200" /></svg>
        </Slot>
        <Slot>
          <svg viewBox="0 0 28 31" className="h-[31px] w-[28px]"><path d="M14 0c4 3 8 4 14 4v11H14z" fill="#2390dc" /><path d="M14 0C10 3 6 4 0 4v11h14z" fill="#31b1ee" /><path d="M0 15h14v16C6 27 .5 22 0 15z" fill="#1479cf" /><path d="M28 15H14v16c8-4 13.500-9 14-16z" fill="#0b4f9f" /></svg>
        </Slot>
        <Slot dot>
          <div className="flex w-[29px] flex-wrap justify-center gap-x-px text-[9px] font-bold text-[#e8352c]">
            <span className="flex h-[12px] w-[14px] items-center justify-center rounded-[1px] border border-b-2 border-[#b9b5b5] bg-[#ececec] leading-none">u</span>
            <span className="flex h-[12px] w-[14px] items-center justify-center rounded-[1px] border border-b-2 border-[#b9b5b5] bg-[#ececec] leading-none">i</span>
            <span className="flex h-[13px] w-[15px] items-center justify-center rounded-[1px] border border-b-2 border-[#b9b5b5] bg-[#ececec] leading-none">n</span>
          </div>
        </Slot>
        <Slot dot>
          <div className="flex h-[28px] w-[28px] items-center justify-center rounded-[8px] bg-[#3f83fb]">
            <svg viewBox="0 0 18 12" className="h-[12px] w-[18px]" fill="#fff"><rect width="11.500" height="11.500" rx="2.500" /><path d="M12.500 4L18 .5V11l-5.500-3.500z" /></svg>
          </div>
        </Slot>
        <Slot active>
          <svg viewBox="0 0 28 27" className="h-[27px] w-[28px]">
            <path d="M15 3h12v21H15z" fill="#fff" stroke="#1d6f42" /><path d="M17 6h4v2h-4zM22 6h4v2h-4zM17 9.500h4v2h-4zM22 9.500h4v2h-4zM17 13h4v2h-4zM22 13h4v2h-4zM17 16.500h4v2h-4zM22 16.500h4v2h-4zM17 20h4v2h-4zM22 20h4v2h-4z" fill="#1d6f42" />
            <path d="M0 3l16.500-3v27L0 24z" fill="#176b3c" /><path d="M4.500 8.500l7 10M11.500 8.500l-7 10" stroke="#fff" strokeWidth="2.200" />
          </svg>
        </Slot>
        <Slot dot>
          <div className="relative h-[30px] w-[31px]">
            <svg viewBox="0 0 31 30" className="h-[30px] w-[31px]"><rect width="31" height="30" rx="8" fill="#0a68e8" /><path d="M7 0h16q8 0 8 8v11q0 9-10 9h-7L5 29l1-4C-1 20 1 6 7 0z" fill="#fff" /></svg>
            <T w={23} className="absolute left-[6px] top-[9px] text-[11.500px] font-bold text-[#0a5fe0]">Zalo</T>
            <div className="absolute -top-[6px] left-[17px] flex h-[20px] w-[20px] items-center justify-center rounded-full bg-[#fb0d0d]"><T w={15} className="text-[13px]">5+</T></div>
          </div>
        </Slot>
      </div>
      <svg viewBox="0 0 16 9" className="ml-[244px] h-[9px] w-[16px] shrink-0" fill="none" stroke="#fff" strokeWidth="1.400"><path d="M1 8.500l7-7.500 7 7.500" /></svg>
      <svg viewBox="0 0 14 20" className="ml-[20px] h-[20px] w-[14px] shrink-0" fill="none" stroke="#8fdcf6" strokeWidth="1.300"><rect x="4" y=".7" width="6" height="12" rx="3" fill="#76cdf0" /><path d="M1 8c0 9 12 9 12 0M7 15v5" /></svg>
      <T w={30} className="ml-[26px]" flat>ENG</T>
      <svg viewBox="0 0 18 15" className="ml-[23px] h-[15px] w-[18px] shrink-0" fill="none" stroke="#fff" strokeWidth="1.500"><path d="M1 6c5-6 11-6 16 0M3.500 8.500c4-4 7-4 11 0" opacity=".35" /><path d="M6 10.500c2-2 4-2 6 0" /><circle cx="9" cy="13" r="1.300" fill="#fff" /></svg>
      <svg viewBox="0 0 20 18" className="ml-[11px] h-[18px] w-[20px] shrink-0" fill="none" stroke="#fff" strokeWidth="1.300"><path d="M1 6h3l4.500-4v14L4 12H1zM11.500 6c1.500 2 1.500 4 0 6M14 3.500c3 3.500 3 7.500 0 11M16.500 1c4 5 4 11 0 16" /></svg>
      <svg viewBox="0 0 20 13" className="ml-[9px] h-[13px] w-[20px] shrink-0" fill="none" stroke="#fff" strokeWidth="1.500"><rect x=".8" y=".8" width="15.500" height="11.400" rx="3" /><path d="M3 3h5v7H3z" fill="#fff" /><path d="M18.500 4.500v4" strokeWidth="2" strokeLinecap="round" /></svg>
      <div className="ml-[19px] flex w-[79px] flex-col items-end gap-[5px]"><T w={51}>1:22 CH</T><T w={79}>28/04/2022</T></div>
      <div className="ml-[6px] flex h-[25px] w-[25px] items-center justify-center rounded-full bg-[#4cb6f5] text-black"><T w={14} className="text-[14px]" flat>10</T></div>
    </div>
  );
}

/* ---------- meeting controls floating over the window ---------- */

function Control({ gap, label, w, icon, green, chevron, extra }: { gap: string; label: string; w: number; icon: React.ReactNode; green?: boolean; chevron?: string; extra?: React.ReactNode }) {
  return (
    <div className={"relative flex h-[67px] shrink-0 flex-col items-center " + gap}>
      <div className="-ml-[2px] flex h-[43px] items-center pt-[3px]">{icon}</div>
      <T w={w} className={"mt-[2px] " + (green ? "text-[#23d959]" : "text-[#c3c4c7]")}>{label}</T>
      {chevron && (
        <svg viewBox="0 0 10 7" className={"absolute top-[15px] h-[7px] w-[10px] " + chevron} fill="none" stroke="#b3b4b6" strokeWidth="1.800"><path d="M.8 1l4.200 4.500L9.200 1" /></svg>
      )}
      {extra}
    </div>
  );
}

function MeetingBar() {
  const g = "#a9aaac";
  return (
    <div className="absolute left-[428px] top-0 z-20 w-[1105px]">
      <div className="relative z-10 flex h-[67px] rounded-b-[9px] border-t border-[#0d0e0f] bg-[linear-gradient(#282a2d,#1e2022)] text-[15px] shadow-[0_1px_5px_rgba(0,0,0,.5)]">
        <Control gap="ml-[33px]" label="Mute" w={37} chevron="left-[48px]" icon={
          <svg viewBox="0 0 18 28" className="h-[28px] w-[18px]" fill={g}><rect x="4" width="10" height="19" rx="5" /><path d="M1 11v3c0 9.500 16 9.500 16 0v-3M9 21v5.500M4.500 26.800h9" fill="none" stroke={g} strokeWidth="1.800" /></svg>} />
        <Control gap="ml-[53px]" label="Start Video" w={77} chevron="left-[73px]" icon={
          <svg viewBox="0 0 30 28" className="h-[28px] w-[30px]" fill={g}><rect y="5" width="21" height="18" rx="3.500" /><path d="M22.500 11L30 6.500v15L22.500 17z" /><path d="M1 28.500L30 .5" stroke="#222426" strokeWidth="4" /><path d="M1 27.500L29.500 0" stroke="#ff5c5c" strokeWidth="1.800" /></svg>} />
        <Control gap="ml-[38px]" label="Security" w={56} icon={
          <svg viewBox="0 0 23 25" className="h-[25px] w-[23px]"><path d="M11.500 1c3 2 6 3 10.500 3.500C22.500 14 19 21 11.500 24 4 21 .5 14 1 4.500 5.500 4 8.500 3 11.500 1z" fill={g} /><path d="M11.500 3.500c2.500 1.500 5 2.300 8.200 2.800V12h-8.200zM11.500 12v9.500C7 19.500 4 16 3.500 12z" fill="#222426" /></svg>} />
        <Control gap="ml-[61px]" label="Participants" w={81} chevron="left-[101px]"
          extra={<T w={15} className="absolute left-[64px] top-[8px] text-[#c3c4c7]">73</T>}
          icon={<svg viewBox="0 0 30 22" className="mt-[2px] h-[22px] w-[30px]" fill={g}><circle cx="9.500" cy="5" r="4.800" /><path d="M0 19c0-8 19-8 19 0 0 2-1 3-3 3H3c-2 0-3-1-3-3z" /><circle cx="21.500" cy="7.500" r="4" /><path d="M19 14c6-2 11 1 11 5.500 0 1.500-1 2.500-3 2.500h-7c1-3 1-5-1-8z" /></svg>} />
        <Control gap="ml-[69px]" label="Chat" w={32}
          extra={<div className="absolute left-[20px] top-[3px] flex h-[20px] w-[20px] items-center justify-center rounded-full bg-[#ff3b3b] text-white"><T w={8}>2</T></div>}
          icon={<svg viewBox="0 0 25 23" className="h-[23px] w-[25px]" fill={g}><path d="M4 0h17q4 0 4 4v9q0 5-5 5h-6l-8 5v-5Q0 17 0 12V4q0-4 4-4z" /></svg>} />
        <Control gap="ml-[44px]" label="New Share" w={75} green chevron="left-[70px]" icon={
          <svg viewBox="0 0 30 22" className="h-[22px] w-[30px]"><rect width="30" height="22" rx="3.500" fill="#23d959" /><path d="M15 17V7M10.500 10.500L15 6l4.500 4.500" fill="none" stroke="#16321f" strokeWidth="2.200" /></svg>} />
        <Control gap="ml-[31px]" label="Pause Share" w={85} icon={
          <svg viewBox="0 0 18 20" className="h-[20px] w-[18px]" fill={g}><rect width="4" height="20" rx="1.500" /><rect x="14" width="4" height="20" rx="1.500" /></svg>} />
        <Control gap="ml-[27px]" label="Annotate" w={64} icon={
          <svg viewBox="0 0 22 22" className="h-[22px] w-[22px]" fill={g}><path d="M0 22l2.500-7.500L13 4l5 5L7.500 19.500zM14.500 2.500L16 1q2-2 4 0l1 1q2 2 0 4l-1.500 1.500z" /></svg>} />
        <Control gap="ml-[34px]" label="Remote Control" w={107} icon={
          <svg viewBox="0 0 18 25" className="ml-[2px] h-[25px] w-[18px]"><rect width="18" height="25" rx="8" fill={g} /><rect x="7.800" y="5" width="2.500" height="7" rx="1" fill="#222426" /></svg>} />
        <Control gap="ml-[43px]" label="More" w={37} icon={
          <svg viewBox="0 0 26 6" className="ml-[2px] h-[6px] w-[26px]" fill={g}><circle cx="3" cy="3" r="2.400" /><circle cx="13" cy="3" r="2.400" /><circle cx="23" cy="3" r="2.400" /></svg>} />
      </div>
      <div className="ml-[336px] flex h-[26px] w-[434px] overflow-hidden rounded-b-[5px] text-[15px] shadow-[0_1px_4px_rgba(0,0,0,.45)]">
        <div className="flex w-[321px] items-center bg-[#23d959]">
          <svg viewBox="0 0 14 13" className="ml-[8px] h-[13px] w-[14px]"><path d="M14 0C8-.5 4 1.500 3 6L0 4.500 1 13h8l-2-3C7 6 9 2 14 0z" fill="#0b5d12" /></svg>
          <T w={159} className="ml-[40px] font-bold text-[#1d2b45]">You are screen sharing</T>
          <svg viewBox="0 0 20 14" className="ml-[42px] h-[14px] w-[20px]" fill="none" stroke="#0b6a1c" strokeWidth="1.400"><path d="M5 13h10c5.500 0 5-7 1-7-1-7-10-6.500-11-1C-.5 5-.5 13 5 13z" /><circle cx="9.500" cy="8" r="2" fill="#f33" stroke="none" /></svg>
          <svg viewBox="0 0 14 15" className="ml-[11px] h-[15px] w-[14px]"><path d="M7 0c2 1.500 4.500 2 7 2 .3 6-2 11-7 13C2 13-.3 8 0 2c2.500 0 5-.5 7-2z" fill="#14500f" /><path d="M3.500 7.500l2.500 2.500 4.500-5" fill="none" stroke="#23d959" strokeWidth="1.600" /></svg>
        </div>
        <div className="flex w-[113px] items-center bg-[#e02828] pb-[2px] text-white">
          <div className="ml-[8px] h-[11px] w-[11px] rounded-[1.500px] bg-white" />
          <T w={75} className="ml-[8px]">Stop Share</T>
        </div>
      </div>
    </div>
  );
}

export default function App() {
  return (
    <div className="relative flex h-[1080px] w-[1920px] flex-col overflow-hidden bg-[#e6e6e6] font-['Open_Sans','Noto_Sans',sans-serif]">
      <div className="bg-[#217346]">
        <TitleBar />
        <RibbonTabs />
      </div>
      <Ribbon />
      <FormulaBar />
      <Sheet />
      <SheetTabs />
      <StatusBar />
      <Taskbar />
      <MeetingBar />
    </div>
  );
}
